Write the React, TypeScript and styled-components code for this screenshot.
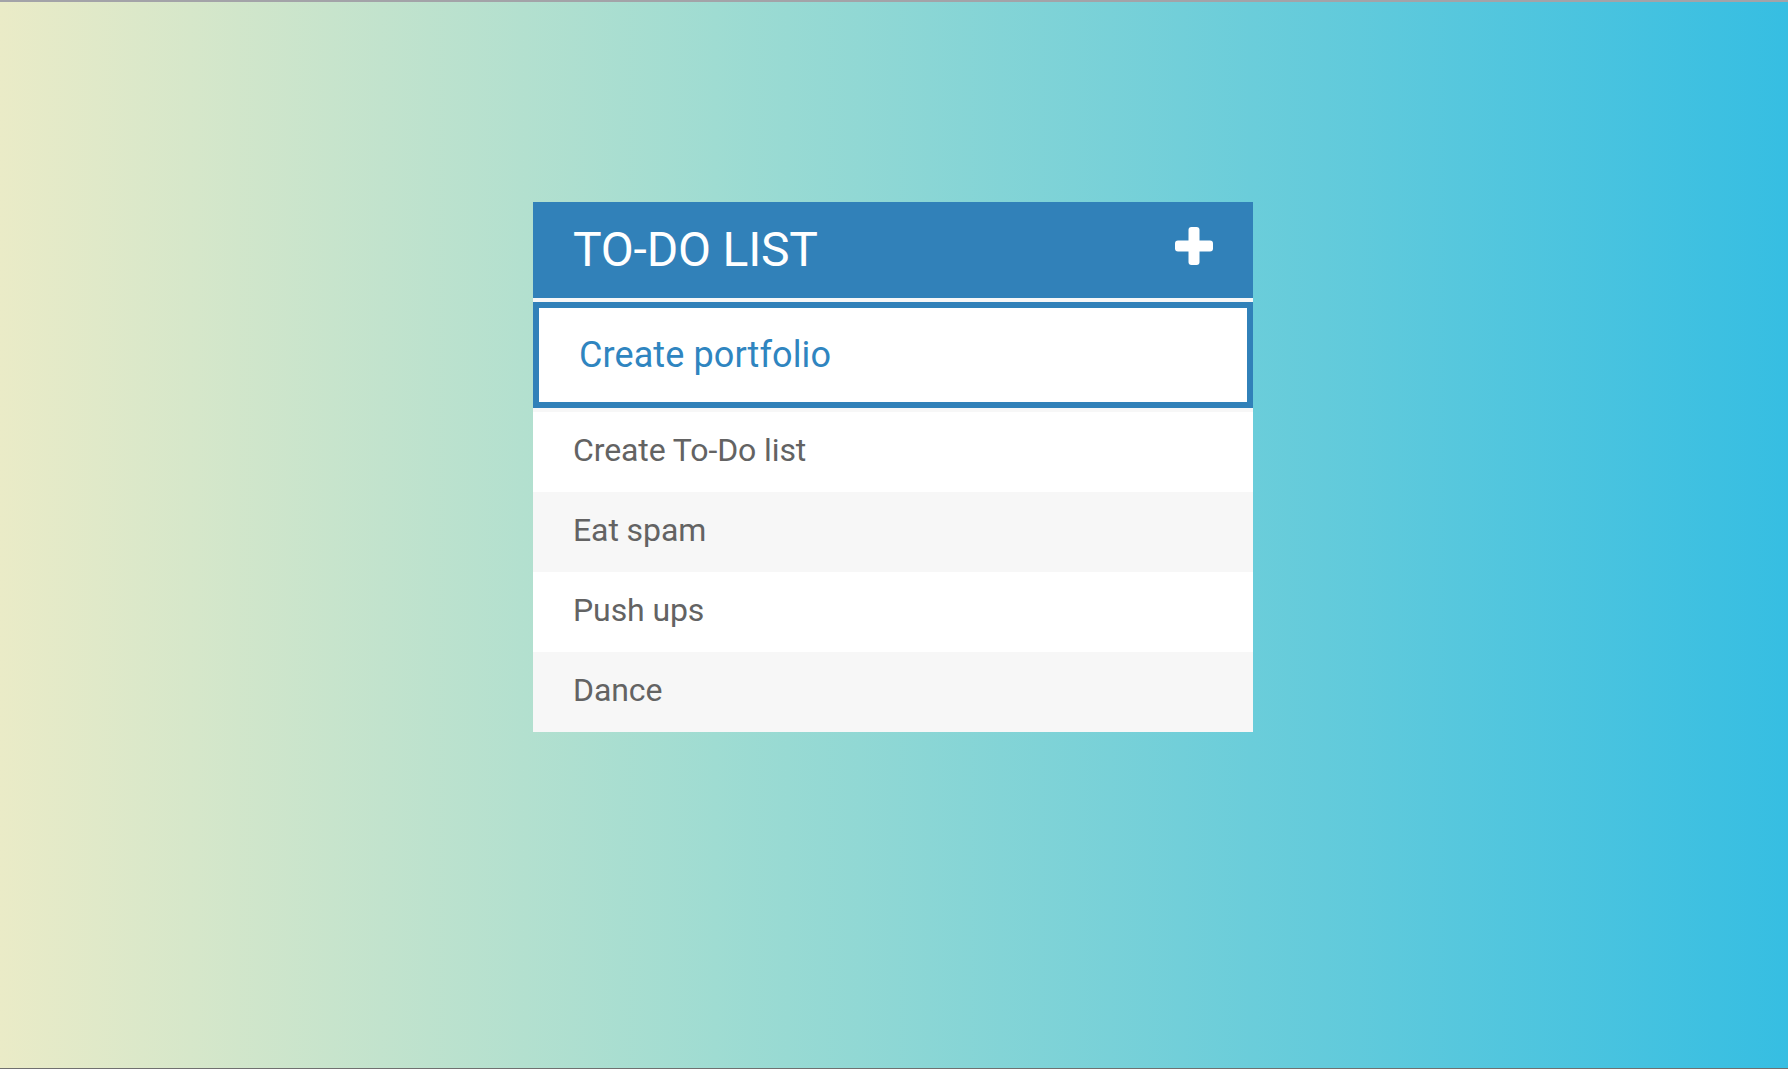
import { useState } from "react";
import styled, { createGlobalStyle } from "styled-components";

const GlobalStyle = createGlobalStyle`
  * {
    box-sizing: border-box;
  }
  html, body {
    margin: 0;
    padding: 0;
    height: 100%;
  }
  body {
    font-family: Roboto, "Liberation Sans", Arial, sans-serif;
  }
  #root {
    height: 100%;
  }
`;

const Page = styled.div`
  min-height: 100vh;
  background: linear-gradient(to right, #eaebc7 0%, #9fdcd2 40%, #36bee2 100%);
  border-top: 2px solid #a3a3a8;
  border-bottom: 1px solid #707070;
  display: flex;
  justify-content: center;
  padding: 200px 2px 0 0;
`;

const Card = styled.div`
  width: 720px;
  align-self: flex-start;
  background-color: #f7f7f7;
  display: flex;
  flex-direction: column;
`;

const Header = styled.header`
  height: 96px;
  background-color: #3181b9;
  display: flex;
  align-items: center;
  justify-content: space-between;
  padding: 0 40px 2px 40px;
`;

const Title = styled.h1`
  margin: 0;
  color: #ffffff;
  font-size: 48px;
  font-weight: 400;
  letter-spacing: -0.2px;
`;

const AddBtn = styled.button`
  cursor: pointer;
  padding: 0;
  border: none;
  background: none;
  display: flex;
  margin-top: -7px;
`;

const Form = styled.form`
  padding: 4px 0;
`;

const Input = styled.input`
  display: block;
  width: 100%;
  height: 106px;
  border: 6px solid #3181b9;
  outline: 0;
  background: #ffffff;
  padding: 0 0 0 40px;
  font-family: Roboto, "Liberation Sans", Arial, sans-serif;
  font-size: 36px;
  letter-spacing: 0.1px;
  color: #2f85c0;
  caret-color: #2f85c0;
`;

const List = styled.ul`
  list-style: none;
  margin: 0;
  padding: 0;
`;

const Item = styled.li<{ $odd: boolean }>`
  height: 80px;
  display: flex;
  align-items: center;
  padding: 0 0 4px 40px;
  background-color: ${(props) => (props.$odd ? "#f7f7f7" : "#ffffff")};
  color: #636363;
  font-size: 32px;
  letter-spacing: -0.1px;
`;

function PlusIcon() {
  return (
    <svg width="38" height="38" viewBox="0 0 38 38">
      <rect x="13.5" y="0" width="11" height="38" rx="3" fill="#ffffff" />
      <rect x="0" y="13.5" width="38" height="11" rx="3" fill="#ffffff" />
    </svg>
  );
}

function App() {
  const [toDo, setToDo] = useState("Create portfolio");
  const toDos = ["Create To-Do list", "Eat spam", "Push ups", "Dance"];
  return (
    <>
      <GlobalStyle />
      <Page>
        <Card>
          <Header>
            <Title>TO-DO LIST</Title>
            <AddBtn>
              <PlusIcon />
            </AddBtn>
          </Header>
          <Form onSubmit={(e) => e.preventDefault()}>
            <Input
              autoFocus
              type="text"
              value={toDo}
              onChange={(e) => setToDo(e.target.value)}
            />
          </Form>
          <List>
            {toDos.map((text, index) => (
              <Item key={text} $odd={index % 2 === 1}>
                {text}
              </Item>
            ))}
          </List>
        </Card>
      </Page>
    </>
  );
}

export default App;
